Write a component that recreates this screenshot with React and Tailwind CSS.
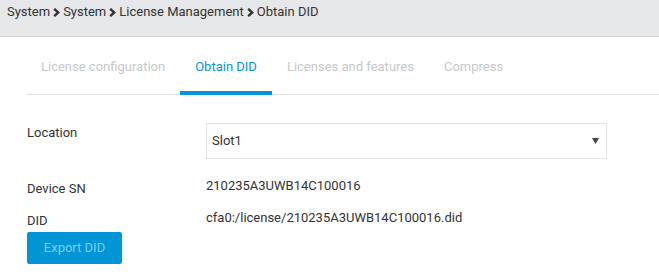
import React from 'react';

const Chevron = () => (
    <svg width="7" height="9" viewBox="0 0 7 9" className="ml-[3px] mr-[3px] mt-[5px] shrink-0">
        <path d="M1.2 0.8 L5.2 4.5 L1.2 8.2" stroke="#333" strokeWidth="2.4" fill="none" />
    </svg>
);

const tabs = ['License configuration', 'Obtain DID', 'Licenses and features', 'Compress'];

export default function App() {
    return (
        <div className="w-[659px] h-[275px] bg-white text-[#333] overflow-hidden text-[13px]" style={{ fontFamily: 'Roboto, sans-serif' }}>
            {/* breadcrumb */}
            <div className="h-[37px] bg-[#e6e7e8] border-b border-[#d0d0d0] flex items-start pt-[3px] pl-[7px] text-[13px] leading-[18px]">
                <span>System</span><Chevron />
                <span>System</span><Chevron />
                <span>License Management</span><Chevron />
                <span>Obtain DID</span>
            </div>

            {/* tabs */}
            <div className="ml-[26px] border-b border-[#e3e3e3] flex h-[58px] items-stretch">
                {tabs.map((t) => {
                    const active = t === 'Obtain DID';
                    return (
                        <div
                            key={t}
                            className={`px-[15px] pt-[5px] flex items-center border-b-[4px] -mb-px ${active ? 'border-[#0096d6] text-[#0096d6]' : 'border-transparent text-[#c4c8cc]'}`}
                        >
                            {t}
                        </div>
                    );
                })}
            </div>

            {/* form */}
            <div className="pl-[27px] pt-[28px]">
                <div className="flex">
                    <div className="w-[179px]">Location</div>
                    <div className="w-[401px] h-[36px] border border-[#e3e3e3] flex items-center justify-between pl-[5px] pr-[7px]">
                        <span>Slot1</span>
                        <svg width="7" height="6" viewBox="0 0 7 6"><path d="M0 0 H7 L3.5 6 Z" fill="#444" /></svg>
                    </div>
                </div>
                <div className="flex mt-[20px]">
                    <div className="w-[179px]">Device SN</div>
                    <div className="-mt-[3px]">210235A3UWB14C100016</div>
                </div>
                <div className="flex mt-[12px]">
                    <div className="w-[179px]">DID</div>
                    <div className="-mt-[3px]">cfa0:/license/210235A3UWB14C100016.did</div>
                </div>
                <button className="mt-[2px] w-[95px] h-[32px] rounded-[2px] bg-[#0096d6] text-[#7fcbec]">Export DID</button>
            </div>
        </div>
    );
}
